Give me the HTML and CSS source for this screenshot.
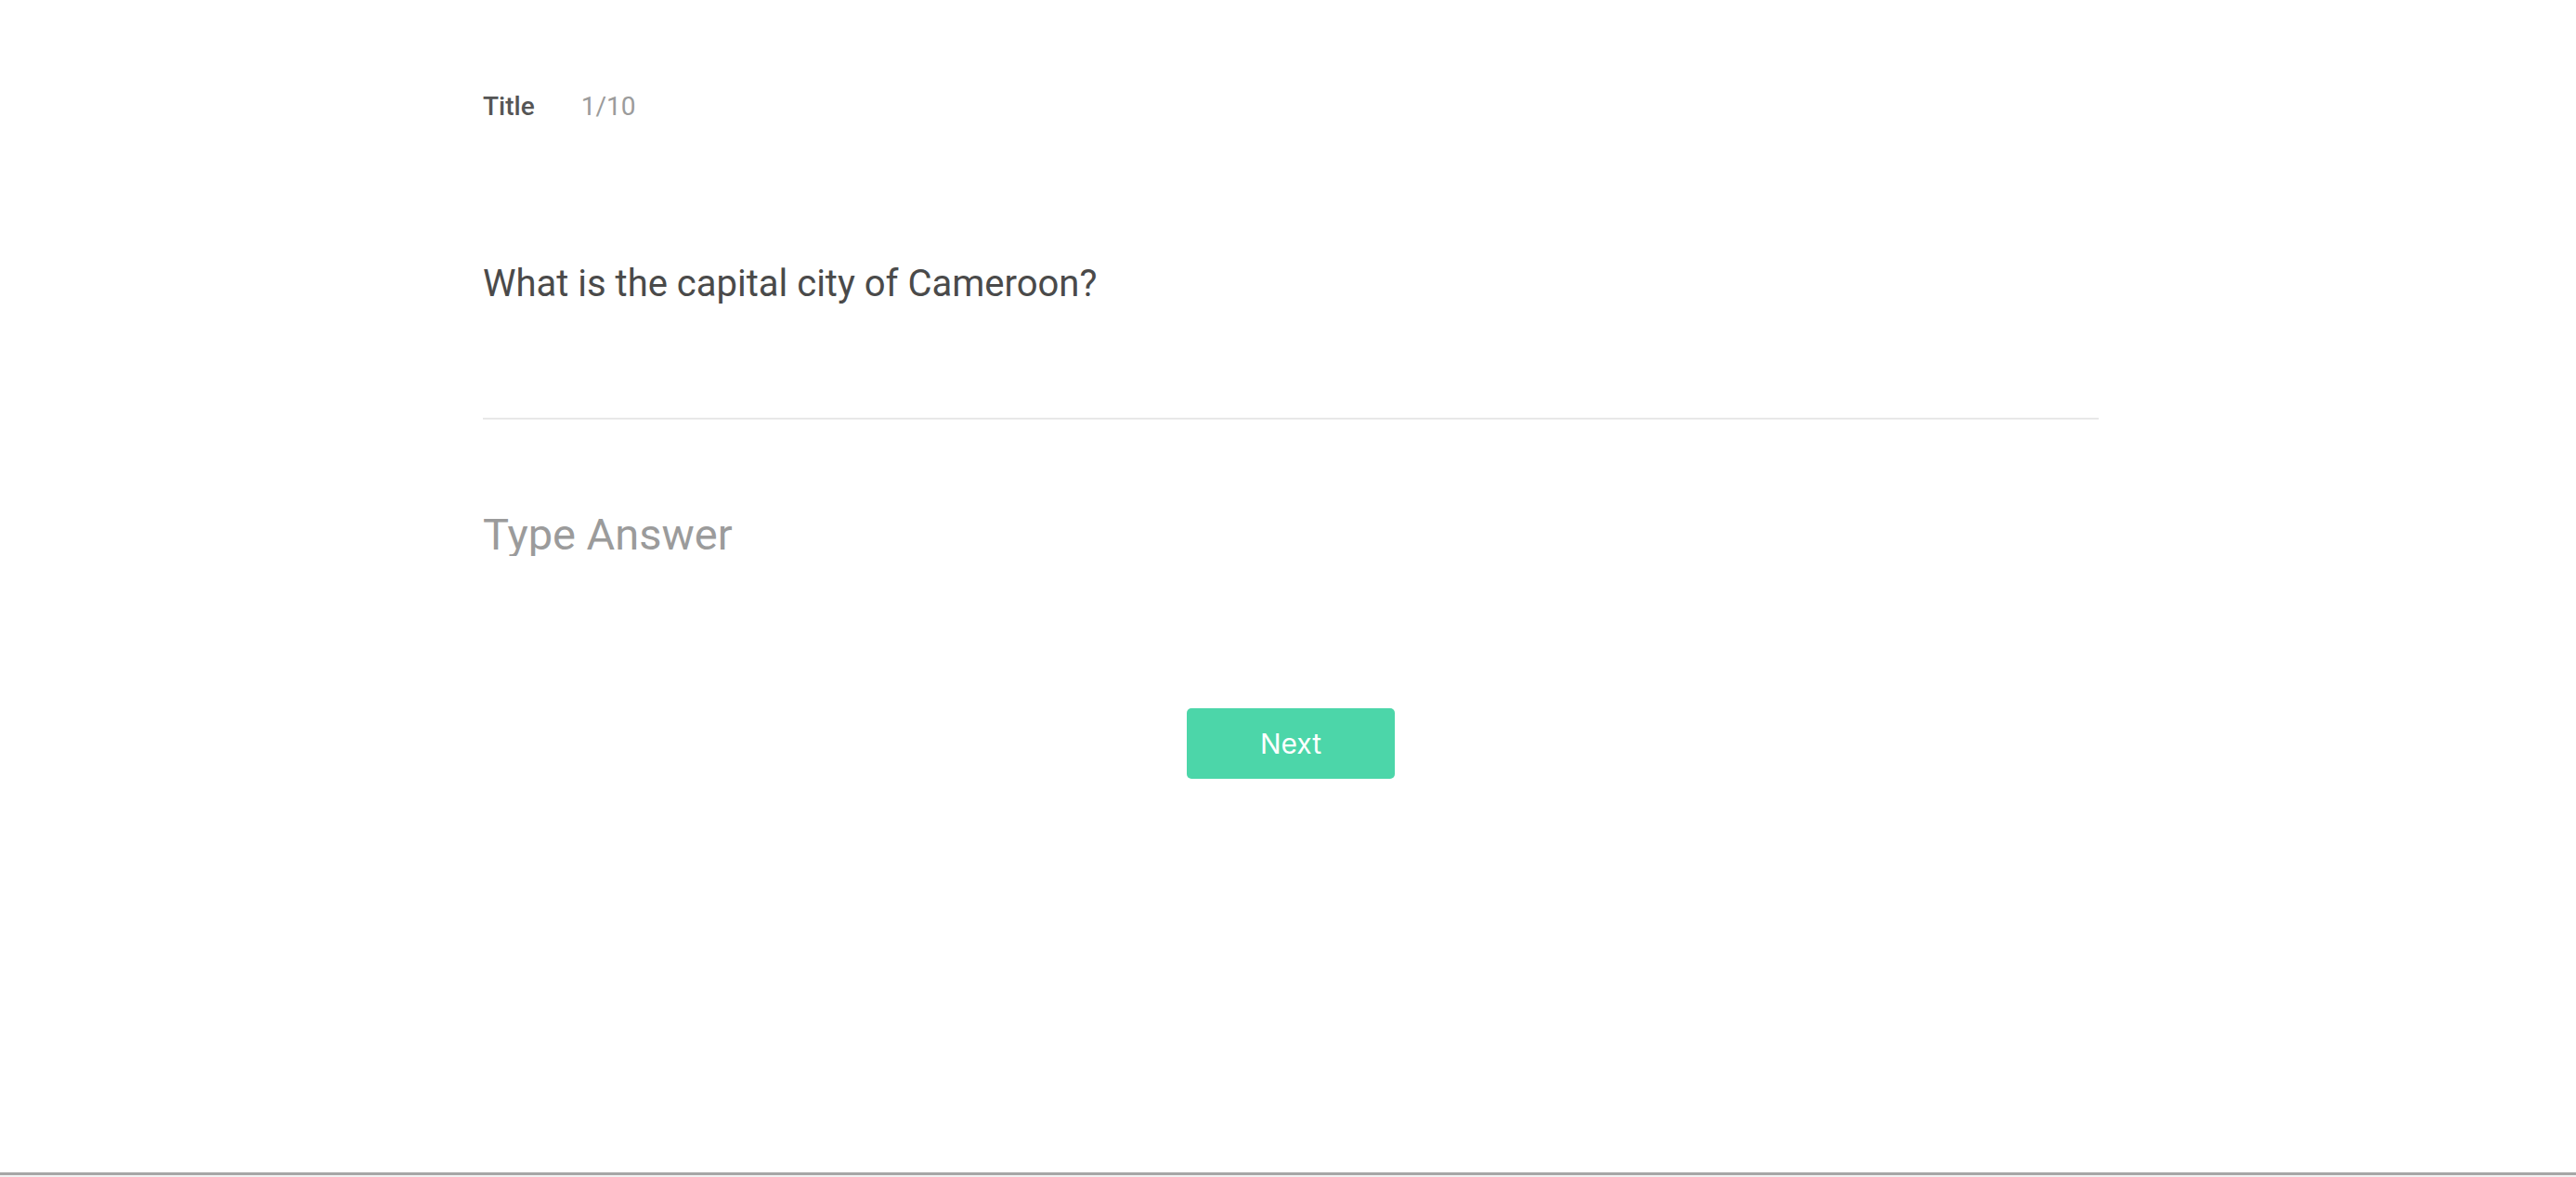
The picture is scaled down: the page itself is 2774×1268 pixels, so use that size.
FILE: index.html
```html
<!DOCTYPE html>
<html lang="en">
<head>
<meta charset="utf-8">
<title>Quiz</title>
<link rel="stylesheet" href="styles.css">
</head>
<body>
<div class="page">
  <main class="quiz">
    <header class="quiz-header">
      <span class="quiz-title">Title</span>
      <span class="quiz-progress">1/10</span>
    </header>
    <h1 class="question">What is the capital city of Cameroon?</h1>
    <hr class="divider">
    <input class="answer" type="text" placeholder="Type Answer">
    <div class="actions">
      <button class="next-btn" type="button">Next</button>
    </div>
  </main>
</div>
</body>
</html>
```

FILE: styles.css
```css
html, body {
  margin: 0;
  padding: 0;
}

body {
  background: #f1f1f1;
  font-family: Roboto, "Liberation Sans", sans-serif;
}

.page {
  box-sizing: border-box;
  height: 1266px;
  padding-left: 6px;
  background: #ffffff;
  border-bottom: 3px solid #a6a6a6;
}

.quiz {
  width: 1740px;
  margin: 0 auto;
  padding-top: 101px;
  display: flex;
  flex-direction: column;
}

.quiz-header {
  display: flex;
  gap: 50px;
  font-size: 28px;
  line-height: 1;
}

.quiz-title {
  font-weight: 500;
  color: #555555;
}

.quiz-progress {
  font-weight: 400;
  color: #9b9b9b;
}

.question {
  margin: 157px 0 0;
  font-size: 40px;
  line-height: 1;
  font-weight: 400;
  color: #4a4a4a;
}

.divider {
  margin: 124px 0 0;
  border: none;
  height: 2px;
  background: #e8e8e8;
}

.answer {
  margin: 100px 0 0;
  padding: 0;
  border: none;
  outline: none;
  background: transparent;
  font-family: Roboto, "Liberation Sans", sans-serif;
  font-size: 47px;
  line-height: 1;
  height: 47px;
  font-weight: 400;
  color: #4a4a4a;
  width: 100%;
}

.answer::placeholder {
  color: #9b9b9b;
  opacity: 1;
}

.actions {
  display: flex;
  justify-content: center;
  margin-top: 164px;
}

.next-btn {
  width: 224px;
  height: 76px;
  border: none;
  border-radius: 5px;
  background: #4cd6a9;
  color: #ffffff;
  font-family: Inter, "Open Sans", sans-serif;
  font-size: 30px;
  font-weight: 400;
  cursor: pointer;
  padding: 0;
}
```
